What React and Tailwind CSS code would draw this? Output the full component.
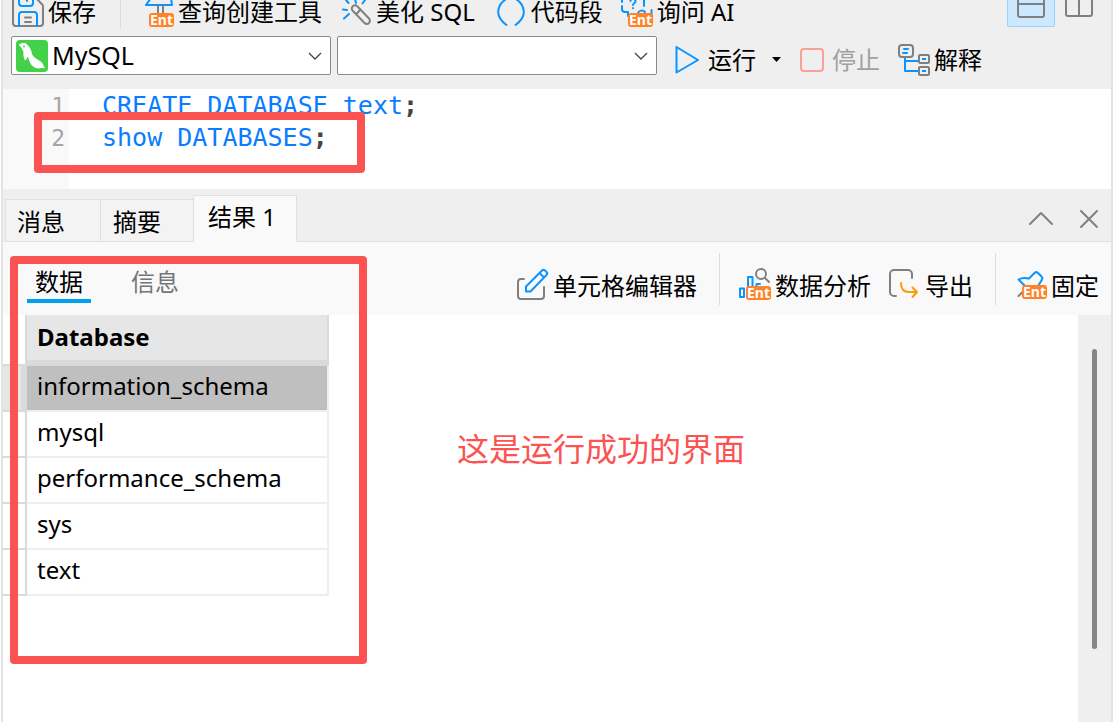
import React from "react";

const GRAY = "#808080";
const BLUE = "#0a94ff";

function Icon({ x, y, w, h, children }) {
  return (
    <svg
      width={w}
      height={h}
      viewBox={`${x} ${y} ${w} ${h}`}
      fill="none"
      strokeWidth="2"
      strokeLinecap="round"
      strokeLinejoin="round"
      className="shrink-0"
      aria-hidden="true"
    >
      {children}
    </svg>
  );
}

function EntBadge({ x, y }) {
  return (
    <g>
      <rect x={x} y={y} width="25" height="14" rx="3" fill="#ff8229" />
      <text
        x={x + 12.5}
        y={y + 12}
        textAnchor="middle"
        fontSize="14"
        fontWeight="700"
        fill="#fff"
        fontFamily="'Noto Sans', sans-serif"
      >
        Ent
      </text>
    </g>
  );
}

const SaveIcon = () => (
  <Icon x={12} y={0} w={32} h={28}>
    <path d="M13 -4V23.500a3 3 0 0 0 3 2.500H40a3 3 0 0 0 3-3V6.500a3 3 0 0 0-1-2.200L36 -2" stroke={GRAY} />
    <path d="M19 -3V3a3 3 0 0 0 3 3h8a3 3 0 0 0 3-3V-3M27 -1V1" stroke={BLUE} />
    <path d="M19 26V15a3 3 0 0 1 3-3H34a3 3 0 0 1 3 3V26" stroke={BLUE} />
    <path d="M25 17.500h6M25 22h6" stroke={GRAY} />
  </Icon>
);

const QueryIcon = () => (
  <Icon x={144} y={0} w={30} h={28}>
    <path d="M151 -2L146 5H172L171 -2" stroke={BLUE} />
    <path d="M158 6V14M163 6V14" stroke={GRAY} />
    <EntBadge x={149} y={13} />
  </Icon>
);

const WandIcon = () => (
  <Icon x={341} y={0} w={30} h={28}>
    <path d="M345 0L347.500 3M354 -1L355 3M364 0L361.500 3.500M342 9.500L346 10M343 18.500L348 14" stroke={BLUE} />
    <path d="M352 11a3 3 0 0 1 4-5L368 18.500a3 3 0 0 1-4.500 4.500ZM355.500 14L359 10" stroke={GRAY} />
  </Icon>
);

const ParensIcon = () => (
  <Icon x={497} y={0} w={28} h={28}>
    <path d="M506 -1C496 6 495 17 506.500 25M516 -1C526 6 527 17 515.500 25" stroke={BLUE} />
  </Icon>
);

const AskIcon = () => (
  <Icon x={621} y={0} w={32} h={28}>
    <path d="M622 -1V2M622 6V9a3 3 0 0 0 3 3H628V16M644 -1V6" stroke={BLUE} />
    <path d="M630.500 1C630.500-2 635.500-2 635.500 1C635.500 3.500 633 3 633 5M633 8V8.200" stroke={BLUE} />
    <path d="M638 13C639 10 643 10 645 12M651.500 10V14" stroke={BLUE} />
    <EntBadge x={628} y={13} />
  </Icon>
);

const PlayIcon = () => (
  <Icon x={675} y={44} w={24} h={30}>
    <path d="M676.500 46V71.500L698 59Z" stroke={BLUE} />
  </Icon>
);

const StopIcon = () => (
  <Icon x={800} y={47} w={24} h={24}>
    <rect x="801" y="48" width="22" height="22" rx="3" stroke="#faa097" />
  </Icon>
);

const ExplainIcon = () => (
  <Icon x={898} y={43} w={32} h={32}>
    <path d="M905 57V70H918M905 60H918" stroke={BLUE} strokeLinecap="butt" />
    <rect x="899" y="44" width="14" height="12" rx="3" stroke={GRAY} />
    <path d="M904 48H908M903 52H907" stroke={BLUE} />
    <rect x="919" y="54" width="10" height="8" rx="1" stroke={GRAY} />
    <rect x="919" y="66" width="10" height="8" rx="1" stroke={GRAY} />
    <path d="M922 58H926M922 70H926" stroke={BLUE} strokeLinecap="butt" />
  </Icon>
);

const ChevronDown = () => (
  <svg width="14" height="10" viewBox="0 0 14 10" fill="none" stroke="#444" strokeWidth="1.3" className="shrink-0" aria-hidden="true">
    <path d="M1 2L7 8L13 2" />
  </svg>
);

const DolphinIcon = () => (
  <svg width="32" height="32" viewBox="0 0 32 32" className="shrink-0" aria-hidden="true">
    <rect width="32" height="32" rx="4" fill="#42d149" />
    <path
      d="M3 5C5 2.500 9 2.500 11 4.500C14 7 15.500 10 16 14C17 17 21 19 24 21C26 22 27 24 27.500 25.500L29 28.500C26 27.500 24 28.500 22 28.500C18 28 15 25.500 13.500 21.500C12.500 19.500 12.500 17.500 12 16.500C11 18 10 20 9 20.500C7.500 18 7 14 7.500 11.500C6.500 10 6 9.500 5.500 8Z"
      fill="#fff"
    />
    <circle cx="8" cy="6.500" r="0.900" fill="#42d149" />
  </svg>
);

const EditIcon = () => (
  <Icon x={516} y={268} w={33} h={33}>
    <path d="M524 279H521a3 3 0 0 0-3 3V296a3 3 0 0 0 3 3H541a3 3 0 0 0 3-3V287" stroke={GRAY} />
    <path d="M526 291.500V286.500L542 270.500Q543.500 269.200 545 270.500L546.500 272Q548 273.500 546.500 275L530.500 291.500ZM539.500 273L544 277.500" stroke={BLUE} />
  </Icon>
);

const AnalysisIcon = () => (
  <Icon x={739} y={268} w={32} h={33}>
    <path d="M740 288.500h4v8.500h-4ZM748 290V277h4.500V290M756.500 290V284h3.500" stroke={BLUE} />
    <circle cx="761" cy="274" r="5" stroke={GRAY} />
    <path d="M765 278L769 282" stroke={GRAY} />
    <EntBadge x={746} y={286} />
  </Icon>
);

const ExportIcon = () => (
  <Icon x={889} y={269} w={30} h={32}>
    <path d="M912 279V275a4 4 0 0 0-4-4H894a4 4 0 0 0-4 4V293a4 4 0 0 0 4 4H896" stroke={GRAY} />
    <path d="M901 284C901 290 904 293 909 293H917M912.500 288.500L917 293L912.500 298" stroke="#ff9a0a" />
  </Icon>
);

const PinIcon = () => (
  <Icon x={1017} y={269} w={31} h={32}>
    <path d="M1037 289L1042 280.500Q1043 279 1041.500 277.500L1037.500 273.500Q1036 272.500 1034.500 274L1029 279.500C1025 278.500 1022 278.500 1018.500 280.500L1027 289" stroke={BLUE} />
    <path d="M1018.500 297L1023 292.500" stroke={GRAY} />
    <EntBadge x={1022} y={286} />
  </Icon>
);

function Tool({ icon, children, disabled, className = "gap-1", labelClassName = "leading-7" }) {
  return (
    <button
      type="button"
      disabled={disabled}
      className={`flex shrink-0 items-center whitespace-nowrap disabled:text-[#a0a0a0] ${className}`}
    >
      {icon}
      <span className={labelClassName}>{children}</span>
    </button>
  );
}

const TOP_LABEL = "self-start leading-6";
const RESULT_LABEL = "pt-1 leading-7";

function Divider({ className }) {
  return <span className={`w-px shrink-0 bg-[#dcdcdc] ${className}`} />;
}

function Combo({ label, icon, options }) {
  return (
    <div className="flex h-[39px] w-80 items-center gap-1 rounded-xs border border-[#8a8a8a] bg-white px-1">
      {icon}
      <select aria-label={label} className="h-full min-w-0 flex-1 appearance-none bg-transparent pb-1 text-[25px] outline-none">
        {options.map((o) => (
          <option key={o}>{o}</option>
        ))}
      </select>
      <span className="flex pr-1">
        <ChevronDown />
      </span>
    </div>
  );
}

function TopToolbar() {
  return (
    <div className="flex h-9 items-start pl-[9px] pr-4">
      <Tool icon={<SaveIcon />} labelClassName={TOP_LABEL}>保存</Tool>
      <Divider className="ml-6 mr-[23px] h-7" />
      <Tool icon={<QueryIcon />} className="gap-1" labelClassName={TOP_LABEL}>查询创建工具</Tool>
      <Tool icon={<WandIcon />} className="ml-5 gap-1" labelClassName={TOP_LABEL}>美化 SQL</Tool>
      <Tool icon={<ParensIcon />} className="ml-[22px] gap-1.5" labelClassName={TOP_LABEL}>代码段</Tool>
      <Tool icon={<AskIcon />} className="ml-[18px] gap-1" labelClassName={TOP_LABEL}>询问 AI</Tool>
      <div className="ml-auto flex items-start gap-2">
        <button type="button" aria-label="上下布局" aria-pressed="true" className="flex h-[27px] w-12 justify-center rounded-b-xs border border-t-0 border-[#99d1ff] bg-[#cce8ff]">
          <Icon x={1016} y={0} w={30} h={20}>
            <path d="M1018 -2V15a2 2 0 0 0 2 2H1042a2 2 0 0 0 2-2V-2M1018 4H1044" stroke={GRAY} />
          </Icon>
        </button>
        <button type="button" aria-label="左右布局">
          <Icon x={1063} y={0} w={32} h={20}>
            <path d="M1066 -2V14a2 2 0 0 0 2 2H1090a2 2 0 0 0 2-2V-2M1079 -2V16" stroke={GRAY} />
          </Icon>
        </button>
      </div>
    </div>
  );
}

function RunToolbar() {
  return (
    <div className="flex items-start pb-[14px] pl-2">
      <div className="flex gap-1.5">
        <Combo label="连接" icon={<DolphinIcon />} options={["MySQL"]} />
        <Combo label="数据库" options={[""]} />
      </div>
      <div className="flex h-[39px] items-center pl-[18px] pt-2">
        <Tool icon={<PlayIcon />} className="gap-[9px]">运行</Tool>
        <button type="button" aria-label="运行选项" className="px-4">
          <svg width="9" height="5" viewBox="0 0 9 5" aria-hidden="true">
            <path d="M0 0H9L4.500 5Z" fill="#000" />
          </svg>
        </button>
        <Tool icon={<StopIcon />} disabled className="ml-[3px] gap-2">停止</Tool>
        <Tool icon={<ExplainIcon />} className="ml-[18px] gap-1">解释</Tool>
      </div>
    </div>
  );
}

function Editor() {
  return (
    <div className="relative flex h-[100px] bg-white font-['DejaVu_Sans_Mono',monospace] text-[25px] leading-8">
      <div className="w-[66px] bg-[#f9f9f9] pr-1 pt-px text-right text-[23px] text-[#a6a6a6]">
        <div>1</div>
        <div>2</div>
      </div>
      <pre className="pl-[33px] pt-px font-[inherit] text-[#0a7cff]">
        <code className="font-[inherit]">
          CREATE DATABASE text<span className="font-bold text-[#444]">;</span>
          {"\n"}
          show DATABASES<span className="font-bold text-[#444]">;</span>
        </code>
      </pre>
      <div className="pointer-events-none absolute left-[31px] top-[23px] h-[61px] w-[331px] rounded-sm border-8 border-[#fb5252]" />
    </div>
  );
}

function ResultTabs() {
  return (
    <div className="flex h-[53px] items-end pl-0.5">
      <div role="tablist" className="flex items-end">
        <button type="button" role="tab" aria-selected="false" className="flex h-[43px] w-24 items-center border border-[#e0e0e0] bg-[#f3f3f3] pl-[11px] pt-0.5">消息</button>
        <button type="button" role="tab" aria-selected="false" className="flex h-[43px] w-[92px] items-center border border-l-0 border-r-0 border-[#e0e0e0] bg-[#f3f3f3] pl-3 pt-0.5">摘要</button>
        <button type="button" role="tab" aria-selected="true" className="flex h-[47px] w-[104px] items-center border border-b-0 border-[#e0e0e0] bg-[#f9f9f9] pb-1 pl-3.5">结果 1</button>
      </div>
      <div className="flex h-full flex-1 items-center justify-end gap-[25px] border-b border-[#e0e0e0] pr-3 pt-2">
        <button type="button" aria-label="收起">
          <Icon x={1028} y={209} w={26} h={20}>
            <path d="M1030 224L1041 213L1052 224" stroke={GRAY} />
          </Icon>
        </button>
        <button type="button" aria-label="关闭">
          <Icon x={1079} y={209} w={20} h={20}>
            <path d="M1081 211L1097 227M1097 211L1081 227" stroke={GRAY} />
          </Icon>
        </button>
      </div>
    </div>
  );
}

function ResultToolbar() {
  return (
    <div className="flex h-[73px] items-start bg-[#f9f9f9] pl-6 pr-3">
      <div role="tablist" className="flex gap-8 pt-[22px]">
        <button type="button" role="tab" aria-selected="true" className="h-[39px] border-b-4 border-[#00a2ed] px-2 pb-1">数据</button>
        <button type="button" role="tab" aria-selected="false" className="h-[39px] border-b-4 border-transparent px-2 pb-1 text-[#757575]">信息</button>
      </div>
      <div className="ml-auto flex h-[73px] items-center pt-[11px]">
        <Tool icon={<EditIcon />} labelClassName={RESULT_LABEL}>单元格编辑器</Tool>
        <Divider className="mb-2.5 ml-[22px] mr-[19px] h-[52px]" />
        <Tool icon={<AnalysisIcon />} labelClassName={RESULT_LABEL}>数据分析</Tool>
        <Tool icon={<ExportIcon />} className="ml-[18px] gap-1.5" labelClassName={RESULT_LABEL}>导出</Tool>
        <Divider className="mb-2.5 ml-[22px] mr-[21px] h-[52px]" />
        <Tool icon={<PinIcon />} className="gap-[3px]" labelClassName={RESULT_LABEL}>固定</Tool>
      </div>
    </div>
  );
}

const DATABASES = ["information_schema", "mysql", "performance_schema", "sys", "text"];

function ResultTable() {
  return (
    <table className="h-fit border-separate border-spacing-0 self-start text-left text-[24px] leading-8">
      <thead>
        <tr>
          <th scope="col" aria-label="行" className="h-[51px] w-6 border-b-2 border-r-2 border-[#dadada] p-0" />
          <th scope="col" className="h-[51px] w-[302px] border-b-6 border-r-2 border-[#dadada] bg-[#e6e6e6] px-2.5 pb-0.5 pt-0 font-bold">Database</th>
        </tr>
      </thead>
      <tbody>
        {DATABASES.map((name, i) => (
          <tr key={name}>
            <td className={i === 0 ? "h-[46px] border-b-2 border-r-6 border-[#dadada] bg-[#e6e6e6] p-0" : "h-[46px] border-b-2 border-r-2 border-[#dadada] p-0"} />
            <td className={i === 0 ? "h-[46px] border-b-2 border-r-2 border-[#eeeeee] bg-[#bfbfbf] bg-clip-padding px-2.5 pb-1 pt-0" : "h-[46px] border-b-2 border-r-2 border-[#eeeeee] px-2.5 pb-1 pt-0"}>
              {name}
            </td>
          </tr>
        ))}
      </tbody>
    </table>
  );
}

export default function App() {
  return (
    <div className="flex min-h-screen bg-white pl-px pr-[5px] font-['Noto_Sans','Noto_Sans_CJK_SC',sans-serif] text-[24px] text-black">
      <main className="flex min-w-0 flex-1 flex-col border-x-2 border-[#e3e3e3] bg-[#efefef]">
        <TopToolbar />
        <RunToolbar />
        <Editor />
        <ResultTabs />
        <section className="relative flex flex-1 flex-col">
          <ResultToolbar />
          <div className="flex flex-1 bg-white">
            <ResultTable />
            <p className="pl-32 pt-27 font-['Noto_Sans_CJK_SC',sans-serif] text-[32px] leading-12 text-[#fb5252]">这是运行成功的界面</p>
            <div className="ml-auto flex w-[33px] justify-center bg-[#efefef] pb-[73px] pt-[34px]">
              <span className="w-[5px] rounded-full bg-[#868686]" />
            </div>
          </div>
          <div className="pointer-events-none absolute left-[7px] top-[14px] h-[408px] w-[357px] rounded-sm border-8 border-[#fb5252]" />
        </section>
      </main>
    </div>
  );
}
